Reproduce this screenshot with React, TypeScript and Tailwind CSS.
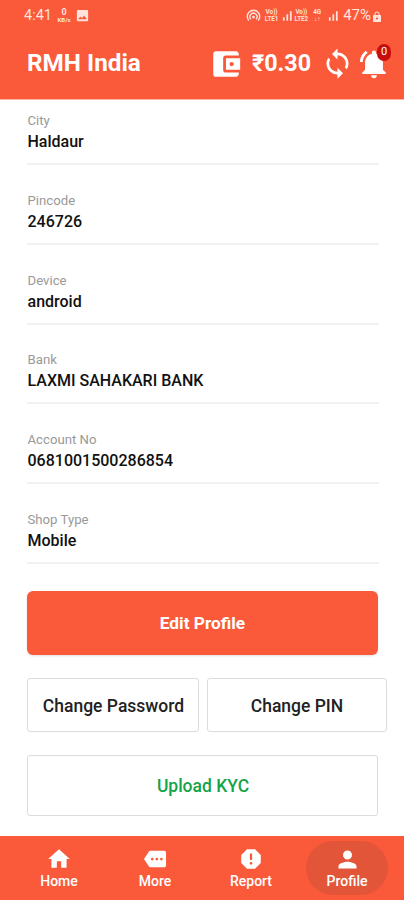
import React from "react";
import {
  MdAccountBalanceWallet,
  MdHome,
  MdImage,
  MdLock,
  MdMore,
  MdPerson,
  MdReport,
  MdSignalCellularAlt,
  MdSync,
} from "react-icons/md";

interface Field {
  label: string;
  value: string;
}

const fields: Field[] = [
  { label: "City", value: "Haldaur" },
  { label: "Pincode", value: "246726" },
  { label: "Device", value: "android" },
  { label: "Bank", value: "LAXMI SAHAKARI BANK" },
  { label: "Account No", value: "0681001500286854" },
  { label: "Shop Type", value: "Mobile" },
];

const tabs = [
  { label: "Home", icon: MdHome, size: "size-[26px]" },
  { label: "More", icon: MdMore, size: "size-[22px]" },
  { label: "Report", icon: MdReport, size: "size-[26px]" },
  { label: "Profile", icon: MdPerson, size: "size-[27px]", active: true },
];

const TinyLabel = ({ top, bottom }: { top: string; bottom: string }) => (
  <div className="flex flex-col items-center text-[6.3px] leading-[7px] font-bold">
    <span>{top}</span>
    <span>{bottom}</span>
  </div>
);

const HotspotIcon = () => (
  <svg viewBox="0 0 16 14" className="mr-[4px] h-[13px] w-[15px]" fill="none" stroke="currentColor" strokeWidth="1.5">
    <path d="M3 12.5A6.7 6.7 0 1 1 13 12.5" />
    <path d="M5.2 11A3.8 3.8 0 1 1 10.8 11" />
    <circle cx="8" cy="8.7" r="1.5" fill="currentColor" stroke="none" />
  </svg>
);

const BellIcon = () => (
  <svg viewBox="0 0 24 24" className="size-[34px]" fill="currentColor">
    <path d="M7.58 4.08 6.15 2.65C3.75 4.48 2.17 7.3 2.03 10.5h2c.15-2.65 1.51-4.97 3.55-6.42z" />
    <path d="M18.3 11c0-3.07-1.94-5.64-4.8-6.32V4a1.5 1.5 0 0 0-3 0v.68C7.63 5.36 5.7 7.92 5.7 11v5l-2 2v1h16.6v-1l-2-2z" />
    <path d="M12 22a2 2 0 0 0 2-2h-4a2 2 0 0 0 2 2z" />
  </svg>
);

const StatusBar = () => (
  <div className="flex h-[31px] items-center justify-between pr-[21px] pl-6 text-[#ffe3dc]">
    <div className="flex items-center">
      <span className="w-[32px] text-[14.5px]">4:41</span>
      <div className="flex w-[16px] flex-col items-center">
        <span className="text-[9px] leading-[9px] font-bold">0</span>
        <span className="text-[6px] leading-[6px] font-bold">KB/s</span>
      </div>
      <MdImage className="ml-[3px] size-[15px]" />
    </div>
    <div className="flex items-center">
      <HotspotIcon />
      <TinyLabel top="Vo))" bottom="LTE1" />
      <MdSignalCellularAlt className="ml-[2px] size-[14px]" />
      <TinyLabel top="Vo))" bottom="LTE2" />
      <div className="ml-[5px]">
        <TinyLabel top="4G" bottom="↓↑" />
      </div>
      <MdSignalCellularAlt className="ml-[5px] size-[14px]" />
      <span className="ml-[3px] text-[15px]">47%</span>
      <MdLock className="mt-[2px] size-[12px]" />
    </div>
  </div>
);

const Header = () => (
  <header className="h-[100px] border-b border-[#fcb3a3] bg-[#fa593a] text-white">
    <StatusBar />
    <div className="flex h-[65px] items-center pl-[27px]">
      <h1 className="w-[182px] text-[24.3px] font-bold">RMH India</h1>
      <MdAccountBalanceWallet className="size-[34px]" />
      <span className="ml-[9px] w-[69px] text-[23.3px] font-bold">₹0.30</span>
      <MdSync className="size-[33px]" />
      <div className="relative ml-[3px]">
        <BellIcon />
        <span className="absolute -top-[3px] left-[20px] flex h-[17px] w-[14px] items-center justify-center rounded-full bg-[#c80f0c] text-[11px]">
          0
        </span>
      </div>
    </div>
  </header>
);

const App = () => {
  return (
    <div className="flex h-[900px] w-[404px] flex-col overflow-hidden bg-white font-['Roboto',sans-serif]">
      <Header />

      <main className="flex-1 px-[27px]">
        {fields.map((field) => (
          <div key={field.label} className="h-[79.8px] pt-[13px]">
            <div className="h-[52px] w-[352px] border-b-2 border-[#f1f1f1] pl-[0.5px]">
              <p className="text-[13.2px] leading-4 text-[#999999]">{field.label}</p>
              <p className="pt-[3px] text-[16px] leading-5 font-medium text-[#111111]">{field.value}</p>
            </div>
          </div>
        ))}

        <button className="mt-3 flex h-16 w-[351px] items-center justify-center rounded-md bg-[#fa593a] pt-[2px] text-[17.3px] font-bold text-white shadow">
          Edit Profile
        </button>
        <div className="mt-[23px] flex w-[360px] gap-2 text-[17.5px] font-medium text-[#222222]">
          <button className="h-[54px] w-[172px] rounded-[3px] border border-[#dcdcdc] pt-[2px] pl-px">Change Password</button>
          <button className="h-[54px] w-[180px] rounded-[3px] border border-[#dcdcdc] pt-[2px]">Change PIN</button>
        </div>
        <button className="mt-[23px] h-[61px] w-[351px] rounded-[3px] border border-[#dcdcdc] pt-px pl-px text-[17.5px] font-medium text-[#15a34a]">
          Upload KYC
        </button>
      </main>

      <nav className="flex h-[64px] shrink-0 items-center justify-between bg-[#fa593a] pr-4 pl-[18px] text-white">
        {tabs.map(({ label, icon: Icon, size, active }) => (
          <div
            key={label}
            className={`flex h-[54px] w-[82px] flex-col items-center justify-center rounded-[27px] pt-[2px] ${
              active ? "bg-[#e35539]" : ""
            }`}
          >
            <div className="flex h-6 items-center">
              <Icon className={size} />
            </div>
            <span className="text-[14px] leading-5 font-medium">{label}</span>
          </div>
        ))}
      </nav>
    </div>
  );
};

export default App;
